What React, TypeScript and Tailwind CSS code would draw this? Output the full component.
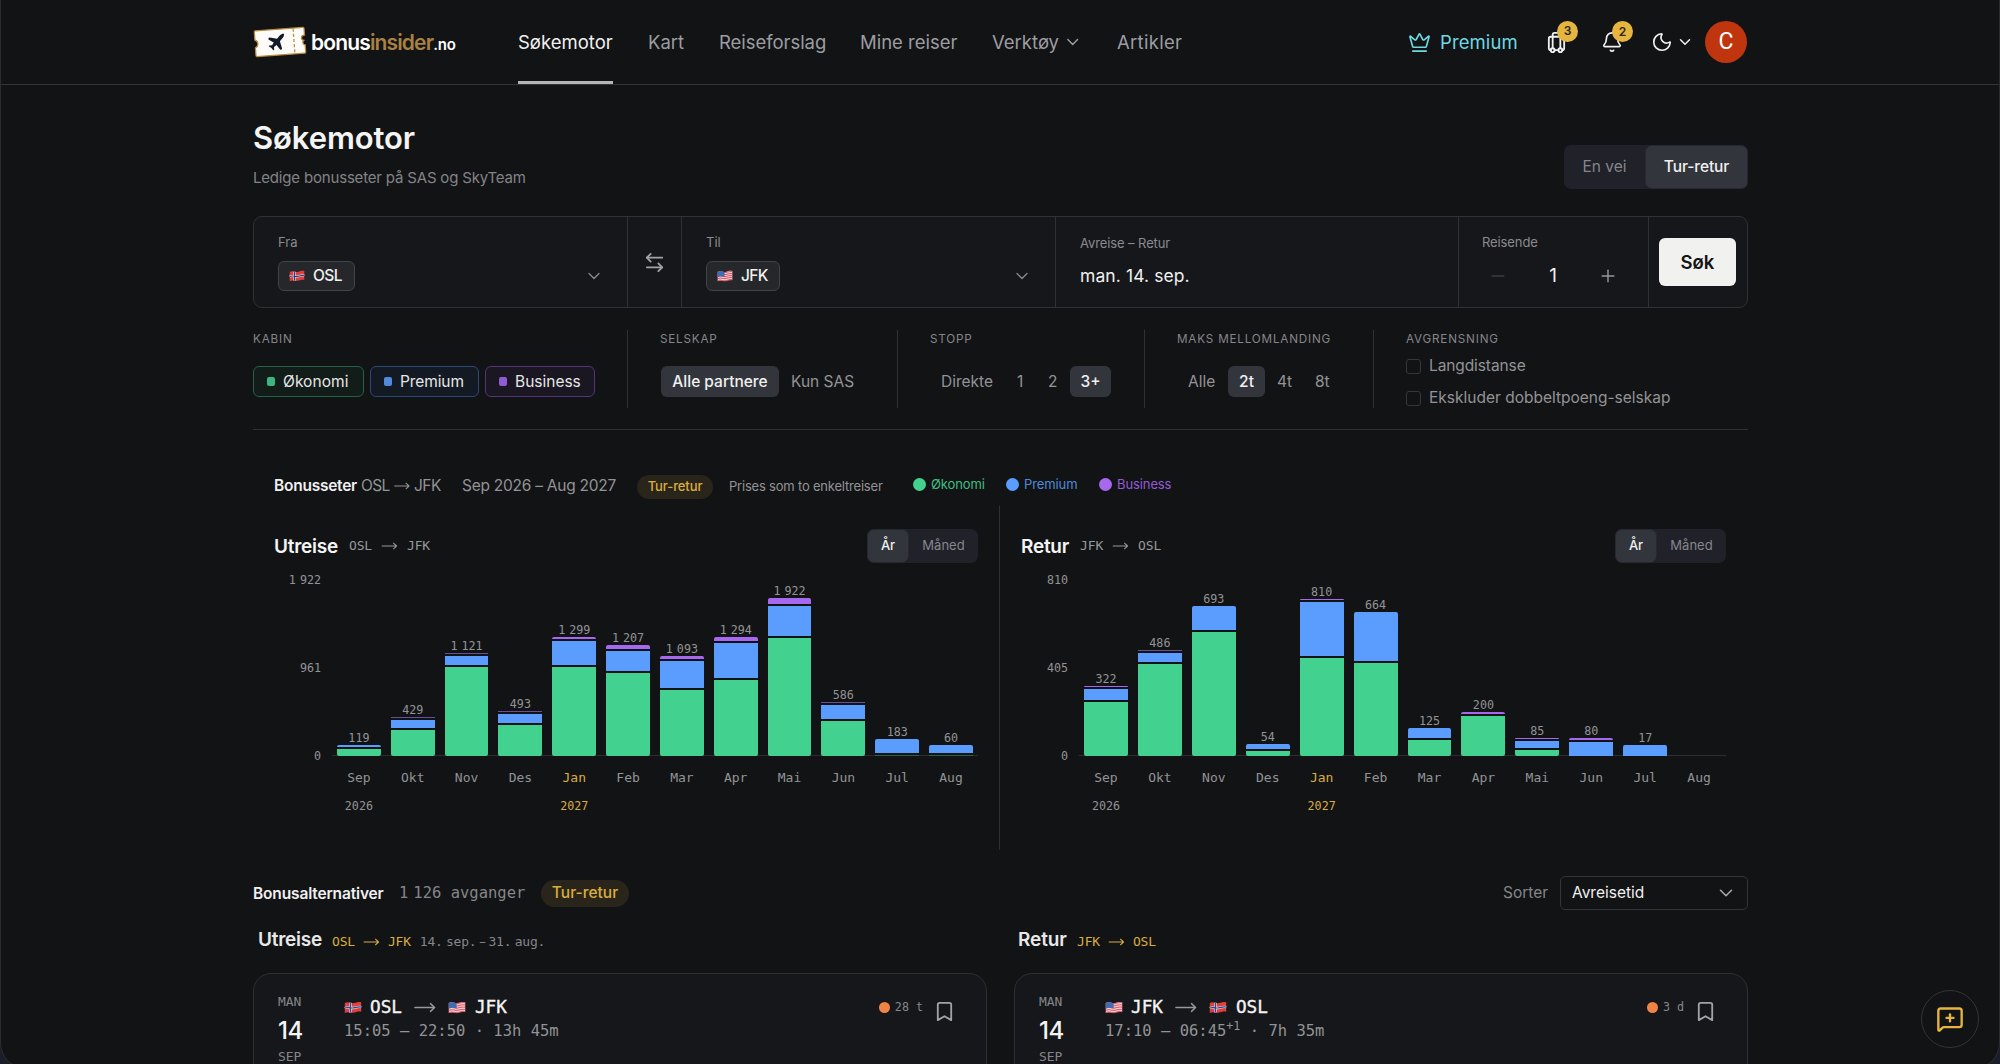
import React from "react";
import {
  ArrowLeftRight,
  Bell,
  Bookmark,
  ChevronDown,
  Crown,
  Luggage,
  MessageSquarePlus,
  Minus,
  Moon,
  Plus,
} from "lucide-react";

const MONO = "font-['DejaVu_Sans_Mono',monospace]";

function FlagNO({ className }: { className: string }) {
  return (
    <svg viewBox="0 0 18 14" preserveAspectRatio="none" className={className}>
      <path d="M0.8 2.2C4 0.2 7 3 10 2.2 13 1.4 14.5 0.4 17.2 1.3L17.2 11.6C14 10.8 12.5 12 9.5 12.6 6.5 13.2 4 11.2 0.8 13Z" fill="#e0403c" />
      <path d="M6.3 1.9V12.4M0.8 7.6C4 6 7 8.2 10 7.4 13 6.6 14.5 5.7 17.2 6.5" fill="none" stroke="#f3e9ee" strokeWidth="2.5" />
      <path d="M6.3 1.9V12.4M0.8 7.6C4 6 7 8.2 10 7.4 13 6.6 14.5 5.7 17.2 6.5" fill="none" stroke="#23408c" strokeWidth="1.3" />
    </svg>
  );
}

function FlagUS({ className }: { className: string }) {
  return (
    <svg viewBox="0 0 18 14" preserveAspectRatio="none" className={className}>
      <path d="M0.8 2.2C4 0.2 7 3 10 2.2 13 1.4 14.5 0.4 17.2 1.3L17.2 11.6C14 10.8 12.5 12 9.5 12.6 6.5 13.2 4 11.2 0.8 13Z" fill="#f4d5da" />
      {[0, 2.4, 4.8, 7.2, 9.6].map((y) => (
        <path key={y} transform={`translate(0 ${y})`} d="M0.8 2.8C4 0.9 7 3.6 10 2.8 13 2 14.5 1 17.2 1.9" fill="none" stroke="#dc5560" strokeWidth="1.2" />
      ))}
      <path d="M0.8 2.2C4 0.2 6 2 8.6 2.3V8C6 8 4 6.5 0.8 8.2Z" fill="#3f6cb4" />
    </svg>
  );
}

function Arrow({ className }: { className: string }) {
  return (
    <svg viewBox="0 0 24 12" className={className} fill="none" stroke="currentColor" strokeWidth="1.6" strokeLinecap="round" strokeLinejoin="round">
      <path d="M1 6H22.5M18 1.8 22.5 6 18 10.2" />
    </svg>
  );
}

function Logo() {
  return (
    <div className="flex w-[204px] items-center">
      <svg viewBox="0 0 52 31" preserveAspectRatio="none" className="h-[32px] w-[54px]">
        <g transform="rotate(-4 26 15.5)">
          <path
            d="M3 3H49a1 1 0 0 1 1 1V10.5a2.500 2.500 0 0 0-1 5 2.500 2.500 0 0 0 1 4.500V27a1 1 0 0 1-1 1H3a1 1 0 0 1-1-1V19.500a4 4 0 0 0 0-7.500V4a1 1 0 0 1 1-1Z"
            fill="#fdfcf9"
            stroke="#b98a3e"
            strokeWidth="1.2"
          />
          <path d="M39.5 3.5V27.5" stroke="#b98a3e" strokeWidth="1.2" strokeDasharray="3 2" />
          <g transform="translate(12.2 5.2) scale(0.86)">
            <path
              d="M17.800 19.200 16 11l3.500-3.500C21 6 21.500 4 21 3c-1-.5-3 0-4.500 1.500L13 8 4.800 6.200c-.5-.1-.9.1-1.100.5l-.3.500c-.2.500-.1 1 .3 1.300L9 12l-2 3H4l-1 1 3 2 2 3 1-1v-3l3-2 3.500 5.300c.3.4.8.5 1.300.3l.5-.2c.4-.3.6-.7.5-1.200z"
              fill="#131a2c"
            />
          </g>
        </g>
      </svg>
      <div className="ml-[4px] flex items-baseline text-[21px] leading-none font-semibold tracking-[-0.85px] whitespace-nowrap">
        <span className="text-white">bonus</span>
        <span className="text-[#a98144]">insider</span>
        <span className="text-[15px] tracking-[-0.2px] text-white">.no</span>
      </div>
    </div>
  );
}

function Header() {
  return (
    <header className="flex h-[85px] items-stretch border-b border-[#333437] px-[253px] text-[18.5px] text-[#9c9da0]">
      <Logo />
      <nav className="ml-[61px] flex flex-1 items-stretch gap-[35px] pt-[2px] whitespace-nowrap">
        <div className="flex w-[95px] items-center border-b-[3px] border-[#b4b5b6] pt-[2px] text-[#f1f1f1]">Søkemotor</div>
        <div className="flex w-[36px] items-center">Kart</div>
        <div className="flex w-[106px] items-center tracking-[-0.05px]">Reiseforslag</div>
        <div className="flex w-[97px] items-center">Mine reiser</div>
        <div className="flex w-[90px] items-center">
          <span className="w-[73px]">Verktøy</span>
          <ChevronDown size={20} strokeWidth={1.8} className="-mt-[2px]" />
        </div>
        <div className="flex items-center tracking-[0.3px]">Artikler</div>
      </nav>
      <div className="flex items-center">
        <Crown size={23} strokeWidth={1.7} className="mr-[9px] text-[#6fd9e2]" />
        <span className="w-[108px] pt-[2px] tracking-[0.1px] text-[#6fd9e2]">Premium</span>
        <div className="relative w-[55px] text-[#f1f1f1]">
          <Luggage size={23} strokeWidth={1.9} className="-ml-[3px]" />
          <span className="absolute -top-[10px] left-[9px] flex h-[21px] w-[21px] items-center justify-center rounded-full bg-[#e5b540] text-[12px] font-semibold text-[#2a2414]">3</span>
        </div>
        <div className="relative w-[48px] text-[#f1f1f1]">
          <Bell size={22} strokeWidth={1.8} className="-ml-[2px]" />
          <span className="absolute -top-[10px] left-[9px] flex h-[21px] w-[21px] items-center justify-center rounded-full bg-[#e5b540] text-[12px] font-semibold text-[#2a2414]">2</span>
        </div>
        <Moon size={22} strokeWidth={1.8} className="text-[#f1f1f1]" />
        <ChevronDown size={18} strokeWidth={2} className="ml-[3px] text-[#f1f1f1]" />
        <div className="ml-[11px] flex h-[42px] w-[42px] items-center justify-center rounded-full bg-[#bf360e] font-['Roboto',sans-serif] text-[23px] text-white">C</div>
      </div>
    </header>
  );
}

function Title() {
  return (
    <div className="flex h-[131px] justify-between">
      <div>
        <h1 className="mt-[34px] text-[31px] leading-[38px] font-semibold tracking-[-0.1px] text-[#f4f4f4]">Søkemotor</h1>
        <p className="mt-[11px] text-[15px] leading-[20px] tracking-[-0.18px] text-[#838487]">Ledige bonusseter på SAS og SkyTeam</p>
      </div>
      <div className="mt-[60px] flex h-[44px] w-[184px] rounded-[7px] bg-[#202129] text-[15.5px]">
        <div className="flex w-[81px] items-center justify-center text-[#85868c]">En vei</div>
        <div className="flex flex-1 items-center justify-center rounded-[7px] border border-[#272830] bg-[#33353d] font-medium tracking-[-0.1px] text-[#f0f0f0]">Tur-retur</div>
      </div>
    </div>
  );
}

function Place({ label, code, flag, className, chip }: { label: string; code: string; flag: React.ReactNode; className: string; chip: string }) {
  return (
    <div className={`flex flex-col border-r border-[#303134] ${className}`}>
      <div className="mt-[15px] text-[13px] leading-[20px] text-[#8a8b8e]">{label}</div>
      <div className="mt-[9px] flex items-center justify-between pr-[23px]">
        <div className={`flex h-[30px] items-center gap-[8px] rounded-[6px] border border-[#424346] bg-[#25272a] pl-[10px] text-[15.5px] font-medium tracking-[-0.6px] text-[#f0f0f0] ${chip}`}>
          {flag}
          {code}
        </div>
        <ChevronDown size={20} strokeWidth={1.5} className="text-[#8a8b8e]" />
      </div>
    </div>
  );
}

function SearchBox() {
  return (
    <div className="flex h-[92px] rounded-[9px] border border-[#303134] bg-[#16171a]">
      <Place className="w-[374px] pl-[24px]" chip="w-[77px]" label="Fra" code="OSL" flag={<FlagNO className="h-[12px] w-[16px]" />} />
      <div className="flex w-[54px] items-center justify-center border-r border-[#303134] text-[#a3a4a6]">
        <ArrowLeftRight size={23} strokeWidth={1.9} />
      </div>
      <Place className="w-[374px] pl-[24px]" chip="w-[74px]" label="Til" code="JFK" flag={<FlagUS className="h-[12px] w-[16px]" />} />
      <div className="w-[403px] border-r border-[#303134] pl-[24px]">
        <div className="mt-[16px] text-[13px] leading-[20px] tracking-[-0.1px] text-[#8a8b8e]">Avreise – Retur</div>
        <div className="mt-[13px] text-[17.5px] leading-[20px] tracking-[0.1px] text-[#f0f0f0]">man. 14. sep.</div>
      </div>
      <div className="w-[190px] border-r border-[#303134] pl-[23px]">
        <div className="mt-[15px] text-[13px] leading-[20px] tracking-[-0.1px] text-[#8a8b8e]">Reisende</div>
        <div className="mt-[14px] flex h-[20px] items-center justify-between pr-[30px] pl-[6px]">
          <Minus size={20} strokeWidth={1.4} className="text-[#505154]" />
          <span className="text-[19px] text-[#f0f0f0]">1</span>
          <Plus size={20} strokeWidth={1.7} className="text-[#97989b]" />
        </div>
      </div>
      <div className="flex flex-1 items-center pl-[10px]">
        <div className="flex h-[48px] w-[77px] items-center justify-center rounded-[6px] bg-[#f1f1f0] pt-[1px] text-[18.5px] font-semibold text-[#141414]">Søk</div>
      </div>
    </div>
  );
}

function GroupLabel({ children }: { children: React.ReactNode }) {
  return <div className="text-[11.7px] leading-[18px] tracking-[0.8px] whitespace-nowrap text-[#85868a]">{children}</div>;
}

function Filters() {
  return (
    <div className="flex h-[122px] border-b border-[#303134] pt-[22px] text-[15.5px] whitespace-nowrap text-[#929396]">
      <div className="h-[78px] w-[375px] border-r border-[#303134]">
        <GroupLabel>KABIN</GroupLabel>
        <div className="mt-[18px] flex h-[31px] gap-[6px] text-[#e6e6e6]">
          <div className="flex w-[111px] items-center rounded-[6px] border border-[#236149] bg-[#121c19] pl-[13px] tracking-[0.05px]">
            <span className="mr-[8px] h-[9px] w-[8px] rounded-[2px] bg-[#3cb57f]" />
            Økonomi
          </div>
          <div className="flex w-[109px] items-center rounded-[6px] border border-[#2c4878] bg-[#141a24] pl-[13px] tracking-[-0.1px]">
            <span className="mr-[8px] h-[9px] w-[8px] rounded-[2px] bg-[#5089de]" />
            Premium
          </div>
          <div className="flex w-[110px] items-center rounded-[6px] border border-[#52347a] bg-[#1a1622] pl-[13px]">
            <span className="mr-[8px] h-[9px] w-[8px] rounded-[2px] bg-[#8f5bd2]" />
            Business
          </div>
        </div>
      </div>
      <div className="h-[78px] w-[270px] border-r border-[#303134] pl-[32px]">
        <GroupLabel>SELSKAP</GroupLabel>
        <div className="mt-[18px] ml-[1px] flex h-[31px] items-center">
          <div className="mr-[12px] flex h-full w-[118px] items-center justify-center rounded-[6px] bg-[#33353d] font-medium text-[#f0f0f0]">Alle partnere</div>
          <span>Kun SAS</span>
        </div>
      </div>
      <div className="h-[78px] w-[247px] border-r border-[#303134] pl-[32px]">
        <GroupLabel>STOPP</GroupLabel>
        <div className="mt-[18px] flex h-[31px] items-center pl-[11px]">
          <span className="w-[76px]">Direkte</span>
          <span className="w-[31px]">1</span>
          <span className="w-[22px]">2</span>
          <div className="flex h-full w-[41px] items-center justify-center rounded-[6px] bg-[#33353d] font-medium text-[#f0f0f0]">3+</div>
        </div>
      </div>
      <div className="h-[78px] w-[229px] border-r border-[#303134] pl-[32px]">
        <GroupLabel>MAKS MELLOMLANDING</GroupLabel>
        <div className="mt-[18px] flex h-[31px] items-center pl-[11px]">
          <span className="w-[40px]">Alle</span>
          <div className="mr-[12px] flex h-full w-[37px] items-center justify-center rounded-[6px] bg-[#33353d] font-medium text-[#f0f0f0]">2t</div>
          <span className="w-[38px]">4t</span>
          <span>8t</span>
        </div>
      </div>
      <div className="pl-[32px]">
        <GroupLabel>AVGRENSNING</GroupLabel>
        <div className="mt-[7px] flex h-[22px] items-center gap-[8px]">
          <span className="h-[15px] w-[15px] rounded-[3px] border border-[#36373b]" />
          <span className="tracking-[-0.1px]">Langdistanse</span>
        </div>
        <div className="mt-[10px] flex h-[22px] items-center gap-[8px]">
          <span className="h-[15px] w-[15px] rounded-[3px] border border-[#36373b]" />
          Ekskluder dobbeltpoeng-selskap
        </div>
      </div>
    </div>
  );
}

function Num({ value }: { value: number }) {
  const thousands = Math.floor(value / 1000);
  const rest = value % 1000;
  if (!thousands) return <>{value}</>;
  return (
    <>
      {thousands}
      <span className="ml-[4px]">{String(rest).padStart(3, "0")}</span>
    </>
  );
}

type Month = { name: string; total: number; eco: number; prem: number; biz: number };

const OUTBOUND: Month[] = [
  { name: "Sep", total: 119, biz: 0, prem: 1.7, eco: 7.5 },
  { name: "Okt", total: 429, biz: 1, prem: 8, eco: 26.3 },
  { name: "Nov", total: 1121, biz: 1, prem: 8.7, eco: 89 },
  { name: "Des", total: 493, biz: 1, prem: 9, eco: 31 },
  { name: "Jan", total: 1299, biz: 2, prem: 23.7, eco: 89 },
  { name: "Feb", total: 1207, biz: 4, prem: 19.7, eco: 83 },
  { name: "Mar", total: 1093, biz: 3, prem: 27, eco: 65.7 },
  { name: "Apr", total: 1294, biz: 4, prem: 34.7, eco: 76 },
  { name: "Mai", total: 1922, biz: 5.7, prem: 30, eco: 118 },
  { name: "Jun", total: 586, biz: 1, prem: 13.7, eco: 35 },
  { name: "Jul", total: 183, biz: 0, prem: 13.3, eco: 1.5 },
  { name: "Aug", total: 60, biz: 0, prem: 7.3, eco: 1.5 },
];

const INBOUND: Month[] = [
  { name: "Sep", total: 322, biz: 1.2, prem: 10.7, eco: 54 },
  { name: "Okt", total: 486, biz: 1, prem: 9, eco: 91.7 },
  { name: "Nov", total: 693, biz: 0, prem: 24.3, eco: 123.7 },
  { name: "Des", total: 54, biz: 0, prem: 5.3, eco: 4.7 },
  { name: "Jan", total: 810, biz: 1.7, prem: 54, eco: 97.7 },
  { name: "Feb", total: 664, biz: 0, prem: 48.7, eco: 93 },
  { name: "Mar", total: 125, biz: 0, prem: 10, eco: 15.7 },
  { name: "Apr", total: 200, biz: 2, prem: 0, eco: 39.7 },
  { name: "Mai", total: 85, biz: 1.5, prem: 7.3, eco: 5.7 },
  { name: "Jun", total: 80, biz: 2, prem: 13.7, eco: 0 },
  { name: "Jul", total: 17, biz: 0, prem: 10.7, eco: 0 },
  { name: "Aug", total: 0, biz: 0, prem: 0, eco: 0 },
];

function Chart({ title, from, to, months, max, className }: { title: string; from: string; to: string; months: Month[]; max: number; className: string }) {
  return (
    <section className={className}>
      <div className="flex h-[34px] items-center">
        <h3 className="text-[19px] leading-none font-semibold tracking-[-0.25px] text-[#f4f4f4]">{title}</h3>
        <div className={`ml-[11px] flex items-center text-[13px] tracking-[-0.15px] text-[#97989b] ${MONO}`}>
          {from}
          <Arrow className="mx-[9px] h-[8px] w-[17px]" />
          {to}
        </div>
        <div className="ml-auto flex h-[34px] w-[111px] rounded-[7px] bg-[#202129] text-[13px]">
          <div className="flex w-[42px] items-center justify-center rounded-[7px] border border-[#272830] bg-[#33353d] font-medium text-[#f0f0f0]">År</div>
          <div className="flex flex-1 items-center justify-center text-[#85868c]">Måned</div>
        </div>
      </div>
      <div className={`flex text-[11.7px] text-[#929396] ${MONO}`}>
        <div className="flex h-[192px] w-[47px] flex-col items-end justify-between pt-[9px] leading-[16px]">
          <span>
            <Num value={max} />
          </span>
          <span>{Math.floor(max / 2)}</span>
          <span className="-mb-[9px]">0</span>
        </div>
        <div className="ml-[11px] h-[250px] flex-1">
          <div className="flex h-[193px] items-end bg-[linear-gradient(#2d2e31,#2d2e31)] bg-[length:100%_1px] bg-bottom bg-no-repeat">
            {months.map((m) => (
              <div key={m.name} className="flex flex-1 flex-col gap-[2px] px-[5px]">
                {m.total > 0 && (
                  <div className="-mx-[5px] -mb-[2px] text-center leading-[13px]">
                    <Num value={m.total} />
                  </div>
                )}
                {m.biz > 0 && <div className={m.biz > 1 ? "rounded-t-[2px] bg-[#a768f0]" : "bg-[#6d4c99]"} style={{ height: m.biz }} />}
                {m.prem > 0 && <div className={m.biz > 0 ? "bg-[#5b9dff]" : "rounded-t-[2px] bg-[#5b9dff]"} style={{ height: m.prem }} />}
                {m.eco > 0 && <div className={m.eco < 2 ? "bg-[#276149]" : "rounded-b-[2px] bg-[#42d18e]"} style={{ height: m.eco }} />}
              </div>
            ))}
          </div>
          <div className="flex">
            {months.map((m) => (
              <div key={m.name} className={`flex flex-1 flex-col items-center ${m.name === "Jan" ? "text-[#d9ad42]" : ""}`}>
                <span className="mt-[14px] text-[13px] leading-[16px]">{m.name}</span>
                <span className="mt-[12px] leading-[16px]">{m.name === "Sep" ? "2026" : m.name === "Jan" ? "2027" : ""}</span>
              </div>
            ))}
          </div>
        </div>
      </div>
    </section>
  );
}

function Overview() {
  return (
    <div className="h-[420px] pt-[38px]">
      <div className="flex h-[35px] items-center pl-[21px] text-[15.5px] whitespace-nowrap text-[#929396]">
        <span className="w-[87px] font-semibold tracking-[-0.25px] text-[#f0f0f0]">Bonusseter</span>
        <span className="w-[29px] tracking-[-0.6px]">OSL</span>
        <Arrow className="mr-[4px] ml-[4px] h-[8px] w-[16px]" />
        <span className="w-[48px] tracking-[-0.5px]">JFK</span>
        <span className="w-[175px] tracking-[-0.25px]">Sep 2026 – Aug 2027</span>
        <span className="mt-[2px] flex h-[24px] w-[76px] items-center justify-center rounded-full bg-[#2a251a] text-[13px] font-medium tracking-[-0.1px] text-[#dbae3f]">Tur-retur</span>
        <span className="mt-[2px] ml-[16px] w-[184px] text-[13px] tracking-[-0.2px]">Prises som to enkeltreiser</span>
        <span className="-mt-[2px] flex w-[93px] items-center gap-[5px] text-[13px] tracking-[-0.1px] text-[#3fbf84]">
          <i className="h-[13px] w-[13px] rounded-full bg-[#42d18e]" />
          Økonomi
        </span>
        <span className="-mt-[2px] flex w-[93px] items-center gap-[5px] text-[13px] tracking-[-0.1px] text-[#5189da]">
          <i className="h-[13px] w-[13px] rounded-full bg-[#5b9dff]" />
          Premium
        </span>
        <span className="-mt-[2px] flex items-center gap-[5px] text-[13px] tracking-[-0.1px] text-[#925bd4]">
          <i className="h-[13px] w-[13px] rounded-full bg-[#a768f0]" />
          Business
        </span>
      </div>
      <div className="mt-[3px] flex h-[344px]">
        <Chart className="w-[747px] border-r border-[#303134] pt-[23px] pr-[21px] pl-[21px]" title="Utreise" from="OSL" to="JFK" months={OUTBOUND} max={1922} />
        <Chart className="flex-1 pt-[23px] pr-[22px] pl-[21px]" title="Retur" from="JFK" to="OSL" months={INBOUND} max={810} />
      </div>
    </div>
  );
}

function FlightCard({ from, to, times, plus, duration, age }: { from: string; to: string; times: string; plus?: string; duration: string; age: string }) {
  const flag = (code: string) => (code === "OSL" ? <FlagNO className="h-[13px] w-[18px]" /> : <FlagUS className="h-[13px] w-[18px]" />);
  return (
    <div className={`flex h-[140px] w-[734px] rounded-[18px] border border-[#2f3033] bg-[#16171a] pl-[24px] ${MONO}`}>
      <div className="w-[66px] pt-[20px]">
        <div className="text-[13px] leading-[16px] tracking-[-0.1px] text-[#85868a]">MAN</div>
        <div className="mt-[8px] font-['Inter',sans-serif] text-[24px] leading-[26px] font-medium tracking-[-0.5px] text-[#f4f4f4]">14</div>
        <div className="mt-[5px] text-[13px] leading-[16px] tracking-[-0.1px] text-[#85868a]">SEP</div>
      </div>
      <div className="flex-1 pt-[22px]">
        <div className="flex h-[22px] items-center text-[17.7px] text-[#f4f4f4] [-webkit-text-stroke:0.35px]">
          {flag(from)}
          <span className="ml-[8px]">{from}</span>
          <Arrow className="mx-[11px] h-[11px] w-[24px] text-[#97989b]" />
          {flag(to)}
          <span className="ml-[9px]">{to}</span>
        </div>
        <div className="mt-[2px] text-[15.5px] leading-[22px] whitespace-pre text-[#929396]">
          {times}
          {plus && <span className="relative -top-[6px] text-[11.7px] leading-none">{plus}</span>}
          {" · " + duration}
        </div>
      </div>
      <div className="flex h-[34px] items-center pt-[32px] pr-[30px] text-[11.7px] text-[#85868a]">
        <i className="mr-[5px] h-[11px] w-[11px] rounded-full bg-[#f18344]" />
        <span className="mt-[1px]">{age}</span>
        <Bookmark size={23} strokeWidth={1.9} className="mt-[8px] ml-[10px] text-[#a3a4a6]" />
      </div>
    </div>
  );
}

function Results() {
  return (
    <div>
      <div className="mt-[26px] flex h-[34px] items-center text-[15.5px]">
        <span className="w-[146px] pt-[1px] font-semibold tracking-[-0.15px] text-[#f0f0f0]">Bonusalternativer</span>
        <span className={`w-[142px] pt-[2px] whitespace-nowrap text-[#85868a] ${MONO}`}>
          1<span className="ml-[5px]">126 avganger</span>
        </span>
        <span className="flex h-[27px] w-[88px] items-center justify-center rounded-full bg-[#2a251a] font-medium text-[#dbae3f]">Tur-retur</span>
        <span className="ml-auto w-[57px] text-[#85868a]">Sorter</span>
        <div className="flex h-[34px] w-[188px] items-center justify-between rounded-[5px] border border-[#333437] pr-[10px] pl-[11px] text-[#f0f0f0]">
          Avreisetid
          <ChevronDown size={22} strokeWidth={1.7} className="text-[#a8a9ab]" />
        </div>
      </div>
      <div className="mt-[20px] flex h-[20px] text-[#d9ad42]">
        <div className="flex w-[760px] items-center pl-[5px]">
          <h3 className="w-[74px] pt-[1px] text-[19px] font-semibold tracking-[-0.25px] text-[#e8e8e8]">Utreise</h3>
          <div className={`mt-[4px] flex items-center text-[13px] tracking-[-0.2px] ${MONO}`}>
            OSL
            <Arrow className="mx-[8px] h-[8px] w-[17px]" />
            JFK
            <span className="ml-[9px] whitespace-nowrap text-[#85868a] [word-spacing:-4.3px]">
              14. sep. <span className="font-['Inter',sans-serif] text-[11px]">–</span> 31. aug.
            </span>
          </div>
        </div>
        <div className="flex items-center pl-[5px]">
          <h3 className="w-[59px] pt-[1px] text-[19px] font-semibold tracking-[-0.1px] text-[#e8e8e8]">Retur</h3>
          <div className={`mt-[4px] flex items-center text-[13px] tracking-[-0.2px] ${MONO}`}>
            JFK
            <Arrow className="mx-[8px] h-[8px] w-[17px]" />
            OSL
          </div>
        </div>
      </div>
      <div className="mt-[23px] flex justify-between">
        <FlightCard from="OSL" to="JFK" times="15:05 – 22:50" duration="13h 45m" age="28 t" />
        <FlightCard from="JFK" to="OSL" times="17:10 – 06:45" plus="+1" duration="7h 35m" age="3 d" />
      </div>
    </div>
  );
}

export default function App() {
  return (
    <div className="relative h-[1064px] w-[2000px] overflow-hidden bg-[#1b1d29] font-['Inter',sans-serif]">
      <div className="h-[1069px] overflow-hidden rounded-b-[26px] border-x border-b border-[#2c2d30] bg-[#121315]">
        <div className="-mx-px">
          <Header />
          <main className="mr-[252px] ml-[253px]">
            <Title />
            <SearchBox />
            <Filters />
            <Overview />
            <Results />
          </main>
        </div>
      </div>
      <button className="absolute top-[990px] left-[1921px] flex h-[58px] w-[58px] items-center justify-center rounded-full border border-[#333437] bg-[#121315] text-[#e5b540]">
        <MessageSquarePlus size={28} strokeWidth={2} />
      </button>
    </div>
  );
}
